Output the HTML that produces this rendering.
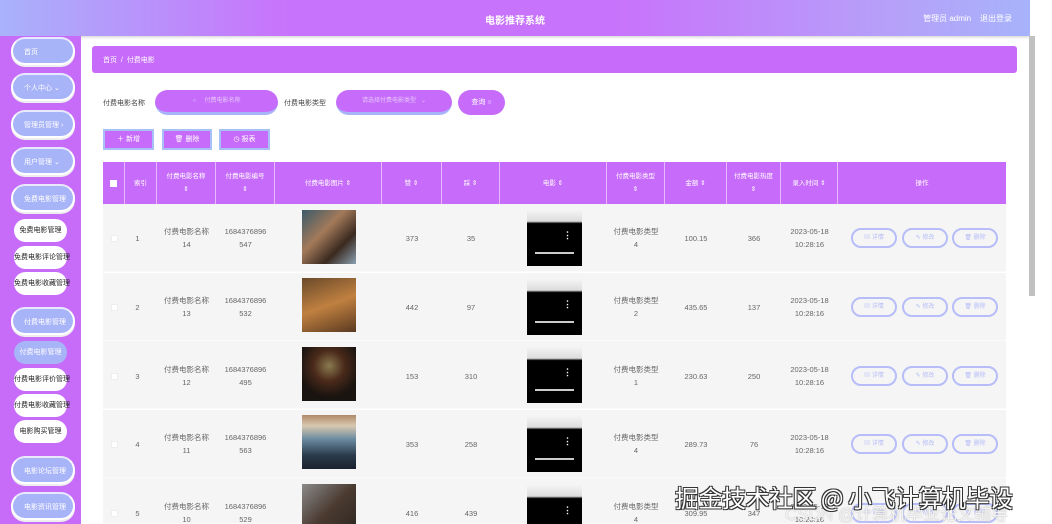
<!DOCTYPE html>
<html style="width:1052px;height:524px;overflow:hidden"><head><meta charset="utf-8"><style>
*{box-sizing:border-box;margin:0;padding:0}
body{width:1052px;height:524px;overflow:hidden;background:#fff;font-family:"Liberation Sans","Noto Sans CJK SC",sans-serif;position:relative;font-size:8px;color:#666}
.hdr{position:absolute;left:0;top:0;width:1030px;height:36px;background:linear-gradient(90deg,#a9b2fb 0%,#c873fb 28%,#c873fb 60%,#b79ef9 85%,#a7b3fa 100%);box-shadow:0 1px 3px rgba(0,0,0,.2)}
.hdr .t{position:absolute;left:0;right:0;top:12px;text-align:center;color:#fff;font-weight:bold;font-size:10px}
.hdr .r{position:absolute;right:18px;top:13px;color:#fff;font-size:8px}
.side{position:absolute;left:0;top:36px;width:81px;height:488px;background:#c76cf9}
.pill{position:absolute;left:11px;width:64px;height:28px;border-radius:14px;background:#a8b4f8;border:2px solid #fff;border-top-color:#e8e8ff;color:#fff;font-size:7px;padding:8px 0 0 11px;box-shadow:0 2px 0 #eee}
.sub{position:absolute;left:14px;width:53px;height:23px;border-radius:12px;background:#fff;color:#222;font-size:7px;text-align:center;line-height:23px;white-space:nowrap}
.bc{position:absolute;left:92px;top:46px;width:925px;height:27px;background:#c76cfa;border-radius:3px;color:#fff;font-size:7px;padding:9px 11px}
.lbl{position:absolute;top:98px;font-size:7px;color:#444}
.inp{position:absolute;top:90px;height:25px;border-radius:13px;background:#c76cfa;border-bottom:3px solid #a8b4f8;color:#e6c6fb;font-size:6px;text-align:center;line-height:22px}
.btn{position:absolute;top:129px;height:21px;background:#c76cfa;border:2px solid #a8c0f8;color:#fff;font-size:7px;text-align:center;line-height:17px}
.th{position:absolute;top:162px;height:42px;background:#c76cfa;color:#fff;font-size:6.5px;text-align:center;display:flex;align-items:center;justify-content:center;border-right:1px solid #e7b8fc;line-height:13px}
.row{position:absolute;left:103px;width:903px;height:68px;background:#f5f5f5;border-bottom:1px solid #fafafa}
.c{position:absolute;text-align:center;font-size:7.5px;color:#666;line-height:13px;display:flex;align-items:center;justify-content:center}
.ob{position:absolute;width:46px;height:20px;border:2px solid #b6bdf8;border-radius:10px;color:#b6bdf8;font-size:6px;text-align:center;line-height:16px}
.vid{position:absolute;width:55px;height:56px;background:linear-gradient(#f4f4f4 0,#ddd 20%,#000 24%)}
.vid:after{content:"";position:absolute;left:8px;right:8px;bottom:12px;height:2px;background:#ccc}
.vid:before{content:"⋮";position:absolute;right:10px;top:20px;color:#fff;font-size:9px;font-weight:bold}
.wm{position:absolute;left:675px;top:479px;font-size:24px;color:#fff;text-shadow:-1px -1px 0 #333,1px -1px 0 #333,-1px 1px 0 #333,1px 1px 0 #333;white-space:nowrap;font-family:"Noto Sans CJK SC",sans-serif;letter-spacing:-0.5px}
.wm2{position:absolute;left:785px;top:500px;font-size:17px;color:rgba(255,255,255,.85);text-shadow:0 0 1px #999;white-space:nowrap}
</style></head><body>
<div class="hdr"><div class="t">电影推荐系统</div><div class="r">管理员 admin &nbsp;&nbsp; 退出登录</div></div>
<div style="position:absolute;left:1030px;top:0;width:22px;height:524px;background:#fff"></div>
<div style="position:absolute;left:1029px;top:36px;width:6px;height:260px;background:#c1c1c1"></div>
<div class="side">
<div class="pill" style="top:1px">首页</div>
<div class="pill" style="top:37px">个人中心 ⌄</div>
<div class="pill" style="top:74px">管理员管理 ›</div>
<div class="pill" style="top:111px">用户管理 ⌄</div>
<div class="pill" style="top:148px">免费电影管理</div>
<div class="sub" style="top:183px">免费电影管理</div>
<div class="sub" style="top:210px">免费电影评论管理</div>
<div class="sub" style="top:236px">免费电影收藏管理</div>
<div class="pill" style="top:271px">付费电影管理</div>
<div class="sub" style="top:305px;background:#a8b4f8;color:#fff">付费电影管理</div>
<div class="sub" style="top:332px">付费电影评价管理</div>
<div class="sub" style="top:358px">付费电影收藏管理</div>
<div class="sub" style="top:384px">电影购买管理</div>
<div class="pill" style="top:420px">电影论坛管理</div>
<div class="pill" style="top:456px">电影资讯管理</div>
</div>
<div class="bc">首页 &nbsp;/&nbsp; 付费电影</div>
<div class="lbl" style="left:103px">付费电影名称</div>
<div class="inp" style="left:155px;width:123px">○ &nbsp;&nbsp;&nbsp; 付费电影名称</div>
<div class="lbl" style="left:284px">付费电影类型</div>
<div class="inp" style="left:336px;width:116px">请选择付费电影类型 &nbsp; ⌄</div>
<div class="inp" style="left:458px;width:47px;border:none;color:#fff;font-size:7px;line-height:25px">查询 ○</div>
<div class="btn" style="left:103px;width:51px">＋ 新增</div>
<div class="btn" style="left:162px;width:50px">🗑 删除</div>
<div class="btn" style="left:219px;width:51px">◷ 报表</div>

<div class="th" style="left:103px;width:22px"><span style="width:7px;height:7px;background:#fff;display:block"></span></div>
<div class="th" style="left:125px;width:32px">索引</div>
<div class="th" style="left:157px;width:59px">付费电影名称<br>⇕</div>
<div class="th" style="left:216px;width:59px">付费电影编号<br>⇕</div>
<div class="th" style="left:275px;width:107px">付费电影图片 ⇕</div>
<div class="th" style="left:382px;width:60px">赞 ⇕</div>
<div class="th" style="left:442px;width:58px">踩 ⇕</div>
<div class="th" style="left:500px;width:107px">电影 ⇕</div>
<div class="th" style="left:607px;width:58px">付费电影类型<br>⇕</div>
<div class="th" style="left:665px;width:62px">金额 ⇕</div>
<div class="th" style="left:727px;width:54px">付费电影热度<br>⇕</div>
<div class="th" style="left:781px;width:57px">录入时间 ⇕</div>
<div class="th" style="left:838px;width:168px;border:none">操作</div>

<div class="row" style="top:204px"></div>
<div class="row" style="top:273px"></div>
<div class="row" style="top:341px"></div>
<div class="row" style="top:410px"></div>
<div class="row" style="top:478px;height:46px"></div>

<div style="position:absolute;left:0;top:0;width:1052px;height:524px;overflow:hidden">
<div class="c" style="left:103px;top:231px;width:22px;height:14px"><span style="width:7px;height:7px;background:#fff;border:1px solid #eee;display:block"></span></div>
<div class="c" style="left:125px;top:231px;width:25px;height:14px">1</div>
<div class="c" style="left:157px;top:225px;width:59px;height:26px">付费电影名称<br>14</div>
<div class="c" style="left:216px;top:225px;width:59px;height:26px">1684376896<br>547</div>
<div style="position:absolute;left:302px;top:210px;width:54px;height:54px;background:linear-gradient(135deg,#3a5a6a,#a37a5a 40%,#3a2a20 70%,#8aa0b0)"></div>
<div class="c" style="left:382px;top:231px;width:60px;height:14px">373</div>
<div class="c" style="left:442px;top:231px;width:58px;height:14px">35</div>
<div class="vid" style="left:527px;top:210px"></div>
<div class="c" style="left:607px;top:225px;width:58px;height:26px">付费电影类型<br>4</div>
<div class="c" style="left:665px;top:231px;width:62px;height:14px">100.15</div>
<div class="c" style="left:727px;top:231px;width:54px;height:14px">366</div>
<div class="c" style="left:781px;top:225px;width:57px;height:26px">2023-05-18<br>10:28:16</div>
<div class="ob" style="left:851px;top:228px">▤ 详情</div><div class="ob" style="left:902px;top:228px">✎ 修改</div><div class="ob" style="left:952px;top:228px">🗑 删除</div>

<div class="c" style="left:103px;top:300px;width:22px;height:14px"><span style="width:7px;height:7px;background:#fff;border:1px solid #eee;display:block"></span></div>
<div class="c" style="left:125px;top:300px;width:25px;height:14px">2</div>
<div class="c" style="left:157px;top:294px;width:59px;height:26px">付费电影名称<br>13</div>
<div class="c" style="left:216px;top:294px;width:59px;height:26px">1684376896<br>532</div>
<div style="position:absolute;left:302px;top:278px;width:54px;height:54px;background:linear-gradient(160deg,#6a4a2a,#c08040 50%,#5a3a20)"></div>
<div class="c" style="left:382px;top:300px;width:60px;height:14px">442</div>
<div class="c" style="left:442px;top:300px;width:58px;height:14px">97</div>
<div class="vid" style="left:527px;top:279px"></div>
<div class="c" style="left:607px;top:294px;width:58px;height:26px">付费电影类型<br>2</div>
<div class="c" style="left:665px;top:300px;width:62px;height:14px">435.65</div>
<div class="c" style="left:727px;top:300px;width:54px;height:14px">137</div>
<div class="c" style="left:781px;top:294px;width:57px;height:26px">2023-05-18<br>10:28:16</div>
<div class="ob" style="left:851px;top:297px">▤ 详情</div><div class="ob" style="left:902px;top:297px">✎ 修改</div><div class="ob" style="left:952px;top:297px">🗑 删除</div>

<div class="c" style="left:103px;top:369px;width:22px;height:14px"><span style="width:7px;height:7px;background:#fff;border:1px solid #eee;display:block"></span></div>
<div class="c" style="left:125px;top:369px;width:25px;height:14px">3</div>
<div class="c" style="left:157px;top:363px;width:59px;height:26px">付费电影名称<br>12</div>
<div class="c" style="left:216px;top:363px;width:59px;height:26px">1684376896<br>495</div>
<div style="position:absolute;left:302px;top:347px;width:54px;height:54px;background:radial-gradient(circle at 50% 35%,#8a7a50 0,#4a2a1a 35%,#1a1410 70%)"></div>
<div class="c" style="left:382px;top:369px;width:60px;height:14px">153</div>
<div class="c" style="left:442px;top:369px;width:58px;height:14px">310</div>
<div class="vid" style="left:527px;top:347px"></div>
<div class="c" style="left:607px;top:363px;width:58px;height:26px">付费电影类型<br>1</div>
<div class="c" style="left:665px;top:369px;width:62px;height:14px">230.63</div>
<div class="c" style="left:727px;top:369px;width:54px;height:14px">250</div>
<div class="c" style="left:781px;top:363px;width:57px;height:26px">2023-05-18<br>10:28:16</div>
<div class="ob" style="left:851px;top:366px">▤ 详情</div><div class="ob" style="left:902px;top:366px">✎ 修改</div><div class="ob" style="left:952px;top:366px">🗑 删除</div>

<div class="c" style="left:103px;top:437px;width:22px;height:14px"><span style="width:7px;height:7px;background:#fff;border:1px solid #eee;display:block"></span></div>
<div class="c" style="left:125px;top:437px;width:25px;height:14px">4</div>
<div class="c" style="left:157px;top:431px;width:59px;height:26px">付费电影名称<br>11</div>
<div class="c" style="left:216px;top:431px;width:59px;height:26px">1684376896<br>563</div>
<div style="position:absolute;left:302px;top:415px;width:54px;height:54px;background:linear-gradient(#b08a6a 0,#d8c8b0 20%,#6a8aa0 45%,#2a3a4a 75%,#1a2230)"></div>
<div class="c" style="left:382px;top:437px;width:60px;height:14px">353</div>
<div class="c" style="left:442px;top:437px;width:58px;height:14px">258</div>
<div class="vid" style="left:527px;top:416px"></div>
<div class="c" style="left:607px;top:431px;width:58px;height:26px">付费电影类型<br>4</div>
<div class="c" style="left:665px;top:437px;width:62px;height:14px">289.73</div>
<div class="c" style="left:727px;top:437px;width:54px;height:14px">76</div>
<div class="c" style="left:781px;top:431px;width:57px;height:26px">2023-05-18<br>10:28:16</div>
<div class="ob" style="left:851px;top:434px">▤ 详情</div><div class="ob" style="left:902px;top:434px">✎ 修改</div><div class="ob" style="left:952px;top:434px">🗑 删除</div>

<div class="c" style="left:103px;top:506px;width:22px;height:14px"><span style="width:7px;height:7px;background:#fff;border:1px solid #eee;display:block"></span></div>
<div class="c" style="left:125px;top:506px;width:25px;height:14px">5</div>
<div class="c" style="left:157px;top:500px;width:59px;height:26px">付费电影名称<br>10</div>
<div class="c" style="left:216px;top:500px;width:59px;height:26px">1684376896<br>529</div>
<div style="position:absolute;left:302px;top:484px;width:54px;height:54px;background:linear-gradient(135deg,#8a8a8a,#4a3a30 50%,#2a2420)"></div>
<div class="c" style="left:382px;top:506px;width:60px;height:14px">416</div>
<div class="c" style="left:442px;top:506px;width:58px;height:14px">439</div>
<div class="vid" style="left:527px;top:485px"></div>
<div class="c" style="left:607px;top:500px;width:58px;height:26px">付费电影类型<br>4</div>
<div class="c" style="left:665px;top:506px;width:62px;height:14px">309.95</div>
<div class="c" style="left:727px;top:506px;width:54px;height:14px">347</div>
<div class="c" style="left:781px;top:500px;width:57px;height:26px">2023-05-18<br>10:28:16</div>
<div class="ob" style="left:851px;top:503px">▤ 详情</div><div class="ob" style="left:902px;top:503px">✎ 修改</div><div class="ob" style="left:952px;top:503px">🗑 删除</div>
<div class="wm2">CSDN @计算机毕业论文辅导</div>
<div class="wm">掘金技术社区 @ 小飞计算机毕设</div>
</div>
</body></html>
